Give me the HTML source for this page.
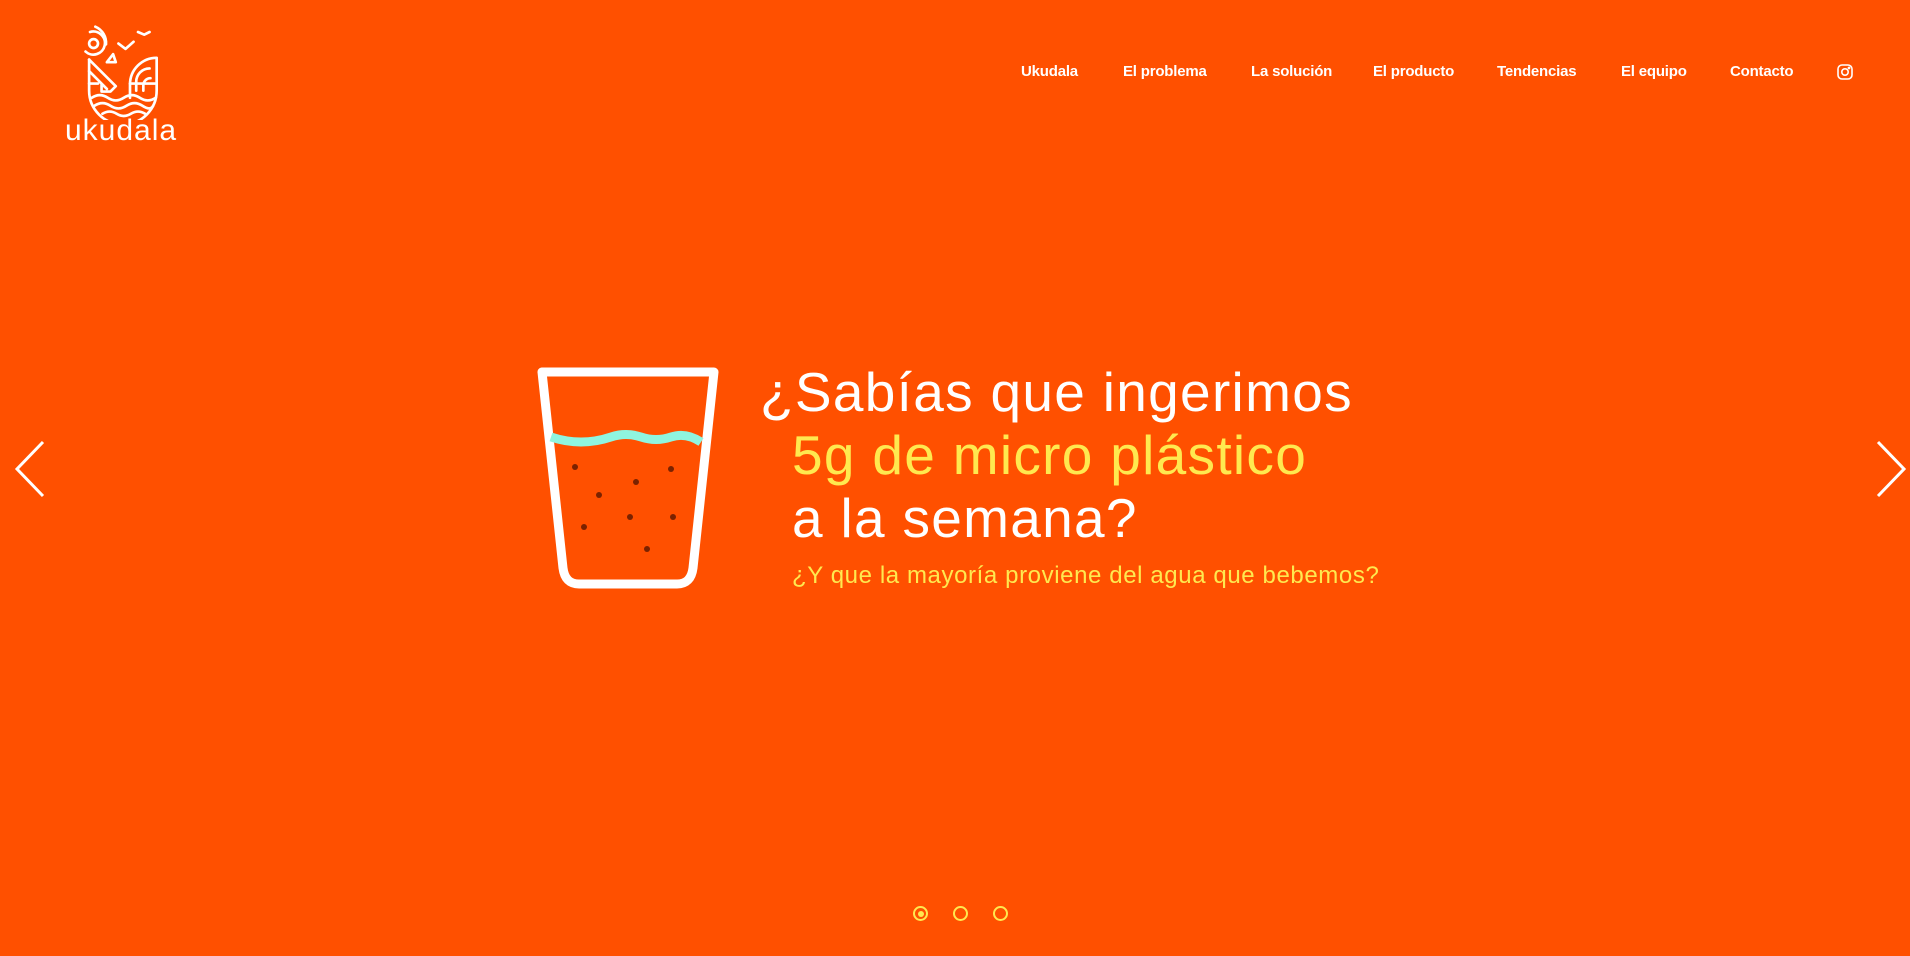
<!DOCTYPE html>
<html><head><meta charset="utf-8"><style>
html,body{margin:0;padding:0;width:1910px;height:956px;overflow:hidden;background:#ff5000;font-family:"Liberation Sans",sans-serif;color:#fff}
.nav a{position:absolute;top:63px;font-weight:bold;font-size:15px;color:#fff;text-decoration:none;letter-spacing:-0.2px}
.h{position:absolute;font-size:55px;line-height:55px;white-space:nowrap;letter-spacing:1.3px}
.dot{position:absolute;top:906px;width:11px;height:11px;border:2px solid #ffe94f;border-radius:50%}
</style></head><body>
<svg style="position:absolute;left:84px;top:24px" width="76" height="96" viewBox="32 5 84 108" fill="none" stroke="#fff" stroke-width="3" stroke-linecap="round" stroke-linejoin="round">
<circle cx="42" cy="27" r="5"/><path d="M38 14a13 13 0 1 1 -5 22"/><path d="M44 8a20 20 0 0 1 12 20"/>
<path d="M70 27l8 6 9-8"/><path d="M92 14l7 3 6-3"/>
<path d="M57 48l7-9 3 9z"/>
<path d="M37 45v35a38 38 0 0 0 76 0v-37a30 30 0 0 0 -30 30v15"/>
<path d="M37 45l30 30-6 6h-10v-8M37 58l20 20M37 72h10"/>
<path d="M90 80v-10a15 15 0 0 1 15-15M98 80v-6a8 8 0 0 1 8-8M83 72h30"/>
<path d="M40 88q9-6 18 0t18 0t18 0t18 0M43 97q9-6 18 0t18 0t18 0t12 0M52 106q8-5 16 0t16 0t16 0"/>
</svg>
<div style="position:absolute;left:65px;top:114px;font-size:30px;letter-spacing:1px">ukudala</div>
<div class="nav">
<a style="left:1021px">Ukudala</a><a style="left:1123px">El problema</a><a style="left:1251px">La solución</a><a style="left:1373px">El producto</a><a style="left:1497px">Tendencias</a><a style="left:1621px">El equipo</a><a style="left:1730px">Contacto</a>
</div>
<svg style="position:absolute;left:1837px;top:64px" width="16" height="16" viewBox="0 0 16 16" fill="none" stroke="#fff" stroke-width="1.6"><rect x="1" y="1" width="14" height="14" rx="4"/><circle cx="8" cy="8" r="3.2"/><circle cx="12" cy="4" r=".6" fill="#fff"/></svg>
<svg style="position:absolute;left:530px;top:362px" width="200" height="240" viewBox="0 0 200 240" fill="none">
<path d="M12 10h172l-21 196q-2 16-16 16h-98q-14 0-16-16z" stroke="#fff" stroke-width="9" stroke-linejoin="round"/>
<path d="M21 75q15 5 30 5t30-5t30 0t30 0t30 5" stroke="#8ff5df" stroke-width="9"/>
<g fill="#7a2200"><circle cx="45" cy="105" r="3"/><circle cx="69" cy="133" r="3"/><circle cx="106" cy="120" r="3"/><circle cx="141" cy="107" r="3"/><circle cx="54" cy="165" r="3"/><circle cx="100" cy="155" r="3"/><circle cx="143" cy="155" r="3"/><circle cx="117" cy="187" r="3"/></g>
</svg>
<div class="h" style="left:760px;top:365px">¿Sabías que ingerimos</div>
<div class="h" style="left:792px;top:428px;color:#ffe94f">5g de micro plástico</div>
<div class="h" style="left:792px;top:491px">a la semana?</div>
<div style="position:absolute;left:792px;top:562px;font-size:24px;color:#ffe94f;letter-spacing:0.6px">¿Y que la mayoría proviene del agua que bebemos?</div>
<svg style="position:absolute;left:13px;top:440px" width="34" height="58" fill="none" stroke="#fff" stroke-width="3"><path d="M30 2L4 29l26 27"/></svg>
<svg style="position:absolute;left:1874px;top:440px" width="34" height="58" fill="none" stroke="#fff" stroke-width="3"><path d="M4 2l26 27L4 56"/></svg>
<div class="dot" style="left:913px"><div style="margin:2.5px;width:6px;height:6px;border-radius:50%;background:#ffe94f"></div></div>
<div class="dot" style="left:953px"></div>
<div class="dot" style="left:993px"></div>
</body></html>
